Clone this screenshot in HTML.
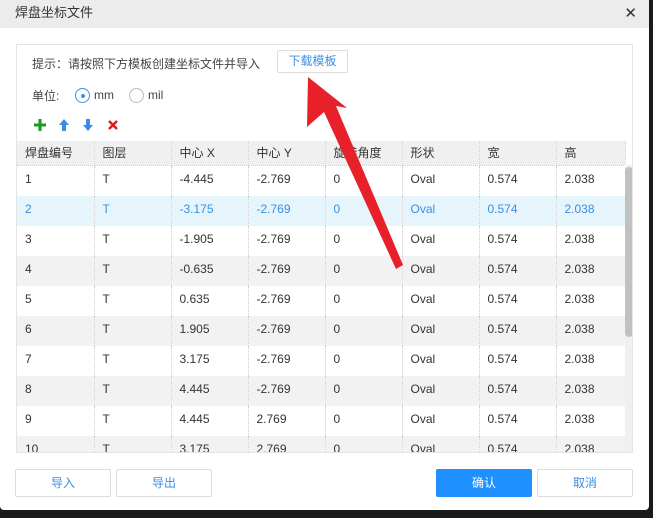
<!DOCTYPE html><html><head><meta charset="utf-8"><style>
*{margin:0;padding:0;box-sizing:border-box}
body{width:653px;height:518px;background:#1a1a1a;font-family:"Liberation Sans","Noto Sans CJK SC",sans-serif;font-size:12px;color:#333;position:relative;overflow:hidden}
.dlg{position:absolute;left:0;top:0;width:649px;height:510px;background:#fff;border-radius:0 0 4px 4px}
.tb{height:28px;background:#ececec;padding-left:15px;line-height:26px;font-size:13px;color:#333}
.x{position:absolute;right:12px;top:4px;font-size:15px;color:#333}
.panel{position:absolute;left:16px;top:44px;width:617px;height:409px;border:1px solid #e4e4e4;overflow:hidden}
.abs{position:absolute}
table{position:absolute;left:0;top:96px;border-collapse:collapse;width:608px;table-layout:fixed}
td,th{height:30px;border-right:1px dotted #ccc;padding-left:8px;text-align:left;font-weight:normal;color:#333;white-space:nowrap;overflow:hidden;line-height:26px;vertical-align:top}
th{height:23px;line-height:24px;background:#f0f0f0;border-bottom:1px dotted #ccc}
tr.g td{background:#f2f2f2}
tr.s td{background:#e6f5fc;color:#3a8ee6}
.btn{position:absolute;top:469px;height:28px;width:96px;border:1px solid #dcdcdc;border-radius:2px;text-align:center;line-height:26px;color:#3a8ee6;font-size:12px}
</style></head><body>
<div class="dlg">
<div class="tb">焊盘坐标文件</div><div class="x">✕</div>
<div class="panel">
<div class="abs" style="left:15px;top:10px;color:#444">提示：请按照下方模板创建坐标文件并导入</div>
<div class="abs" style="left:260px;top:5px;width:71px;height:23px;border:1px solid #dcdcdc;border-radius:2px;color:#3a8ee6;text-align:center;line-height:21px">下载模板</div>
<div class="abs" style="left:15px;top:42px;color:#444">单位:</div>
<div class="abs" style="left:58px;top:43px;width:15px;height:15px;border:1px solid #3a8ee6;border-radius:50%"><div style="position:absolute;left:4.5px;top:4.5px;width:4px;height:4px;background:#3a8ee6;border-radius:50%"></div></div>
<div class="abs" style="left:77px;top:43px;color:#444">mm</div>
<div class="abs" style="left:112px;top:43px;width:15px;height:15px;border:1px solid #bbb;border-radius:50%"></div>
<div class="abs" style="left:131px;top:43px;color:#444">mil</div>
<svg class="abs" style="left:16px;top:72px" width="100" height="16">
<path d="M7 2v12M1 8h12" stroke="#1a9a1a" stroke-width="3"/>
<path d="M31 2l-5 6h3v6h4v-6h3z" fill="#3a8ee6"/>
<path d="M55 14l-5-6h3v-6h4v6h3z" fill="#3a8ee6"/>
<path d="M76 4l8 8M84 4l-8 8" stroke="#e21a1a" stroke-width="2.5"/>
</svg>
<table>
<colgroup><col style="width:77px"><col style="width:77px"><col style="width:77px"><col style="width:77px"><col style="width:77px"><col style="width:77px"><col style="width:77px"><col style="width:69px"></colgroup>
<tr><th>焊盘编号</th><th>图层</th><th>中心 X</th><th>中心 Y</th><th>旋转角度</th><th>形状</th><th>宽</th><th>高</th></tr>
<tr><td>1</td><td>T</td><td>-4.445</td><td>-2.769</td><td>0</td><td>Oval</td><td>0.574</td><td>2.038</td></tr>
<tr class="s"><td>2</td><td>T</td><td>-3.175</td><td>-2.769</td><td>0</td><td>Oval</td><td>0.574</td><td>2.038</td></tr>
<tr><td>3</td><td>T</td><td>-1.905</td><td>-2.769</td><td>0</td><td>Oval</td><td>0.574</td><td>2.038</td></tr>
<tr class="g"><td>4</td><td>T</td><td>-0.635</td><td>-2.769</td><td>0</td><td>Oval</td><td>0.574</td><td>2.038</td></tr>
<tr><td>5</td><td>T</td><td>0.635</td><td>-2.769</td><td>0</td><td>Oval</td><td>0.574</td><td>2.038</td></tr>
<tr class="g"><td>6</td><td>T</td><td>1.905</td><td>-2.769</td><td>0</td><td>Oval</td><td>0.574</td><td>2.038</td></tr>
<tr><td>7</td><td>T</td><td>3.175</td><td>-2.769</td><td>0</td><td>Oval</td><td>0.574</td><td>2.038</td></tr>
<tr class="g"><td>8</td><td>T</td><td>4.445</td><td>-2.769</td><td>0</td><td>Oval</td><td>0.574</td><td>2.038</td></tr>
<tr><td>9</td><td>T</td><td>4.445</td><td>2.769</td><td>0</td><td>Oval</td><td>0.574</td><td>2.038</td></tr>
<tr class="g"><td>10</td><td>T</td><td>3.175</td><td>2.769</td><td>0</td><td>Oval</td><td>0.574</td><td>2.038</td></tr>
</table>
<div class="abs" style="left:608px;top:120px;width:9px;height:290px;background:#f0f0f0"></div>
<div class="abs" style="left:608px;top:122px;width:8px;height:170px;background:#c1c1c1;border-radius:4px"></div>
</div>
<svg class="abs" style="left:0;top:0" width="649" height="510">
<polygon points="308,77 347,108 336,106 403,265 396,269 324,112 307,127" fill="#e8202a"/>
</svg>
<div class="btn" style="left:15px">导入</div>
<div class="btn" style="left:116px">导出</div>
<div class="btn" style="left:436px;background:#1e90ff;border-color:#1e90ff;color:#fff">确认</div>
<div class="btn" style="left:537px">取消</div>
</div>
</body></html>
